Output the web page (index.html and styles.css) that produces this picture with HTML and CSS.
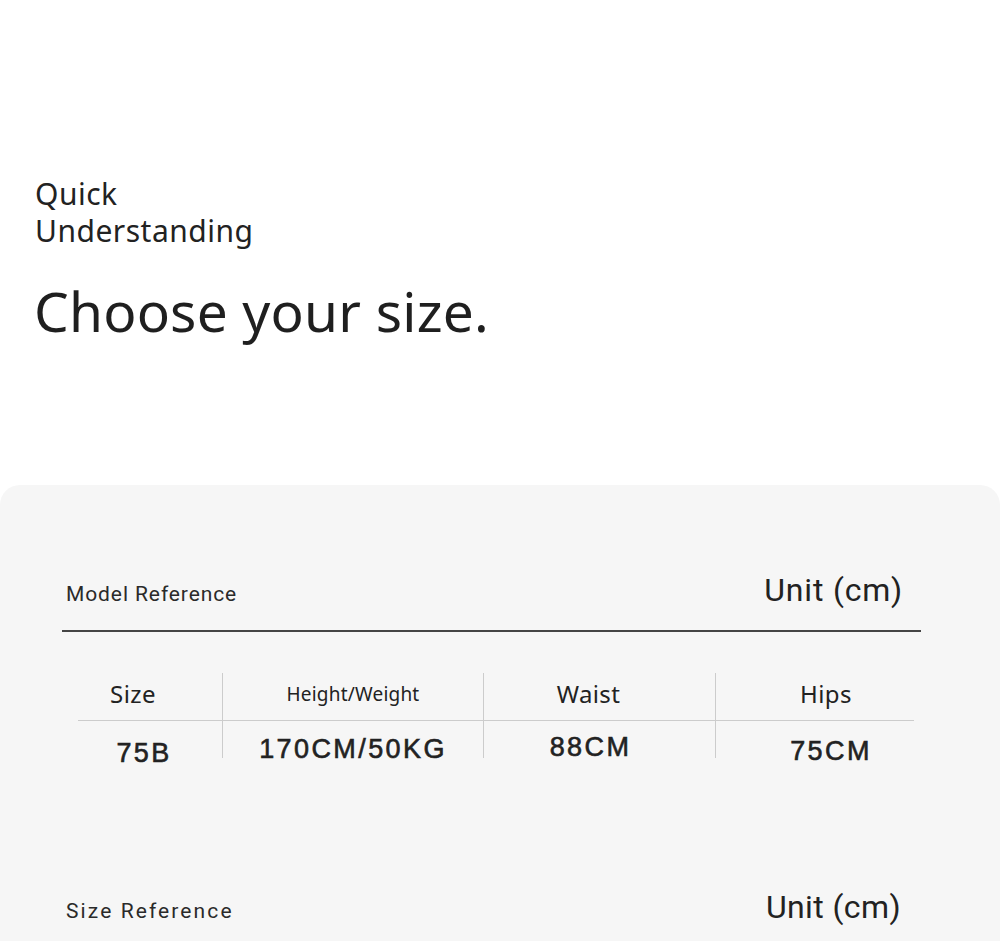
FILE: index.html
```html
<!DOCTYPE html>
<html>
<head>
<meta charset="utf-8">
<link rel="stylesheet" href="styles.css">
</head>
<body>
<section class="intro">
  <div class="kicker">Quick<br>Understanding</div>
  <h1 class="title">Choose your size.</h1>
</section>
<section class="card">
  <div class="card-head">
    <span class="label">Model Reference</span>
    <span class="unit">Unit (cm)</span>
  </div>
  <div class="rule"></div>
  <div class="table">
    <div class="cell th c1">Size</div>
    <div class="cell th c2 small">Height/Weight</div>
    <div class="cell th c3">Waist</div>
    <div class="cell th c4">Hips</div>
    <div class="cell td c1">75B</div>
    <div class="cell td c2">170CM/50KG</div>
    <div class="cell td c3">88CM</div>
    <div class="cell td c4">75CM</div>
  </div>
  <div class="card-head second">
    <span class="label">Size Reference</span>
    <span class="unit">Unit (cm)</span>
  </div>
</section>
</body>
</html>
```
FILE: styles.css
```css
html, body {
  margin: 0;
  padding: 0;
  background: #ffffff;
  height: 941px;
  overflow: hidden;
}
body {
  font-family: "Noto Sans", "Open Sans", sans-serif;
  color: #222222;
}
.intro {
  padding: 175px 0 0 35px;
  height: 485px;
  box-sizing: border-box;
}
.kicker {
  font-size: 30px;
  line-height: 37px;
  letter-spacing: 0.5px;
  color: #222;
}
.title {
  margin: 27px 0 0 -1px;
  font-weight: 400;
  font-size: 55px;
  line-height: 70px;
  letter-spacing: 0.2px;
  color: #1f1f1f;
}
.card {
  background: #f6f6f6;
  border-radius: 20px 20px 0 0;
  height: 456px;
  padding: 86px 79px 0 62px;
  box-sizing: border-box;
}
.card-head {
  display: flex;
  justify-content: space-between;
  align-items: baseline;
  padding: 0 18px 0 4px;
}
.label {
  font-family: Roboto, "Noto Sans", sans-serif;
  font-size: 21px;
  letter-spacing: 0.9px;
  color: #2a2a2a;
}
.unit {
  font-family: Roboto, "Noto Sans", sans-serif;
  font-size: 32px;
  letter-spacing: 0.8px;
  color: #222;
}
.rule {
  margin-top: 21px;
  height: 2px;
  background: #454545;
}
.table {
  margin: 41px 7px 0 16px;
  display: grid;
  grid-template-columns: 144px 261px 232px 199px;
  grid-template-rows: 48px 37px;
}
.cell {
  display: flex;
  justify-content: center;
  color: #222;
}
.c2, .c3, .c4 {
  border-left: 1px solid #cccccc;
}
.th {
  align-items: center;
  font-size: 24px;
  letter-spacing: 0.4px;
  border-bottom: 1px solid #cccccc;
  padding-bottom: 6px;
}
.th.small {
  font-size: 19px;
  letter-spacing: 0.2px;
}
.th.c1 { padding-right: 34px; }
.th.c3 { padding-right: 22px; }
.th.c4 { padding-left: 22px; }
.td {
  font-family: "Liberation Sans", Arial, sans-serif;
  font-weight: 400;
  -webkit-text-stroke: 0.6px #222;
  font-size: 27px;
  letter-spacing: 2.4px;
  line-height: 30px;
  padding-top: 13px;
  white-space: nowrap;
}
.td.c1 { padding-top: 17px; padding-right: 12px; }
.td.c3 { padding-top: 11px; padding-right: 18px; }
.td.c4 { padding-top: 15px; padding-left: 32px; }
.card-head.second {
  margin-top: 130px;
  padding-right: 20px;
}
.card-head.second .label {
  letter-spacing: 2.1px;
}
.card-head.second .unit {
  letter-spacing: 0.4px;
}
```
